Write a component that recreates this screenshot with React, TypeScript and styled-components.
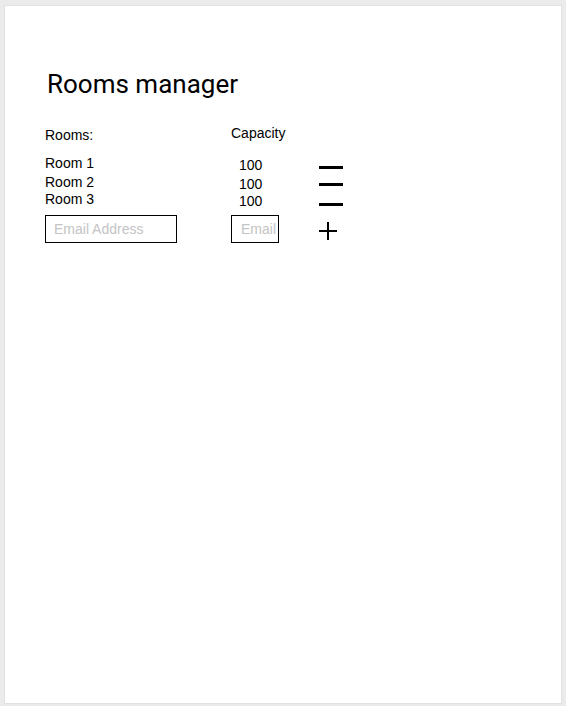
import React, { useState } from 'react'
import styled, { createGlobalStyle } from 'styled-components'

interface Room {
  id: number
  name: string
  capacity: number
}

const GlobalStyle = createGlobalStyle`
  html, body {
    margin: 0;
    padding: 0;
    background: #ebebeb;
  }
  body {
    font-family: 'Liberation Sans', Arial, sans-serif;
    font-size: 14px;
    color: #000;
  }
`

const Card = styled.div`
  margin: 5px 4px 2px 4px;
  height: 699px;
  box-sizing: border-box;
  background: #fff;
  border: 1px solid #e2e2e2;
  padding: 62px 40px 0 40px;
`

const Title = styled.h1`
  margin: 0 0 25px 2px;
  font-family: Roboto, 'Noto Sans', sans-serif;
  font-weight: 400;
  font-size: 26px;
  line-height: 32px;
`

const Table = styled.div`
  display: grid;
  grid-template-columns: 186px 88px 40px;
  align-items: start;
  justify-items: start;
`

const HeaderCell = styled.div<{ $offset?: number }>`
  line-height: 16px;
  margin-top: ${(p) => p.$offset ?? 0}px;
  margin-bottom: 12px;
`

const NameCell = styled.div<{ $h: number }>`
  height: ${(p) => p.$h}px;
  line-height: 16px;
`

const CapacityCell = styled.div<{ $h: number }>`
  height: ${(p) => p.$h}px;
  line-height: 16px;
  padding: 2px 0 0 8px;
  box-sizing: border-box;
`

const IconCell = styled.div<{ $h: number }>`
  height: ${(p) => p.$h}px;
`

const IconButton = styled.button<{ $top: number }>`
  display: block;
  margin-top: ${(p) => p.$top}px;
  padding: 0;
  border: none;
  background: transparent;
  cursor: pointer;
  line-height: 0;
`

const TextInput = styled.input<{ $w: number; $pad: number }>`
  width: ${(p) => p.$w}px;
  height: 28px;
  box-sizing: border-box;
  margin-top: 8px;
  border: 1px solid #000;
  padding: 0 0 0 ${(p) => p.$pad}px;
  font-family: 'Liberation Sans', Arial, sans-serif;
  font-size: 14px;
  outline: none;
  &::placeholder {
    color: #c4c4c4;
  }
`

const MinusIcon = () => (
  <svg width="24" height="3" viewBox="0 0 24 3">
    <rect x="0" y="0" width="24" height="3" fill="#000" />
  </svg>
)

const PlusIcon = () => (
  <svg width="18" height="18" viewBox="0 0 18 18">
    <rect x="0" y="8" width="18" height="2" fill="#000" />
    <rect x="8" y="0" width="2" height="18" fill="#000" />
  </svg>
)

// row heights and icon offsets taken from the mockup
const rowHeights = [19, 17, 16]
const iconTops = [10, 8, 11]

const App: React.FC = () => {
  const [rooms, setRooms] = useState<Room[]>([
    { id: 1, name: 'Room 1', capacity: 100 },
    { id: 2, name: 'Room 2', capacity: 100 },
    { id: 3, name: 'Room 3', capacity: 100 },
  ])
  const [name, setName] = useState('')
  const [capacity, setCapacity] = useState('')

  const handleRemove = (id: number) => setRooms(rooms.filter((r) => r.id !== id))

  const handleAdd = () => {
    if (!name) return
    setRooms([...rooms, { id: Date.now(), name, capacity: Number(capacity) || 0 }])
    setName('')
    setCapacity('')
  }

  return (
    <>
      <GlobalStyle />
      <Card>
        <Title>Rooms manager</Title>
        <Table>
          <HeaderCell $offset={2}>Rooms:</HeaderCell>
          <HeaderCell>Capacity</HeaderCell>
          <div />
          {rooms.map((room, i) => {
            const h = rowHeights[i] ?? 17
            return (
              <React.Fragment key={room.id}>
                <NameCell $h={h}>{room.name}</NameCell>
                <CapacityCell $h={h}>{room.capacity}</CapacityCell>
                <IconCell $h={h}>
                  <IconButton $top={iconTops[i] ?? 9} onClick={() => handleRemove(room.id)}>
                    <MinusIcon />
                  </IconButton>
                </IconCell>
              </React.Fragment>
            )
          })}
          <TextInput
            $w={132}
            $pad={8}
            placeholder="Email Address"
            value={name}
            onChange={(e) => setName(e.target.value)}
          />
          <TextInput
            $w={48}
            $pad={9}
            placeholder="Email"
            value={capacity}
            onChange={(e) => setCapacity(e.target.value)}
          />
          <IconButton $top={15} onClick={handleAdd}>
            <PlusIcon />
          </IconButton>
        </Table>
      </Card>
    </>
  )
}

export default App
